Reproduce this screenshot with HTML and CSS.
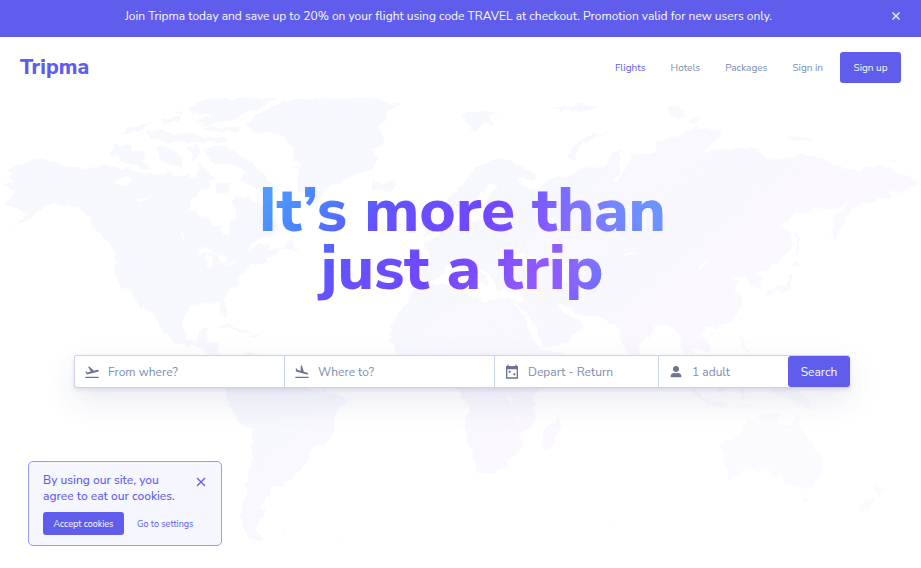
FILE: index.html
```html
<!DOCTYPE html>
<html lang="en">
<head>
<meta charset="utf-8">
<meta name="viewport" content="width=device-width, initial-scale=1">
<title>Tripma</title>
<link rel="stylesheet" href="styles.css">
</head>
<body>
<div class="banner">
  <p class="banner-text">Join Tripma today and save up to 20% on your flight using code TRAVEL at checkout. Promotion valid for new users only.</p>
  <button class="close" type="button" aria-label="Dismiss promotion">
    <svg viewBox="0 0 10 10" width="10" height="10"><path d="M1.5 1.5 8.5 8.5M8.5 1.5 1.5 8.5"/></svg>
  </button>
</div>
<header class="header">
  <a class="logo" href="#">Tripma</a>
  <nav class="nav">
    <a class="active" href="#">Flights</a>
    <a href="#">Hotels</a>
    <a href="#">Packages</a>
    <a href="#">Sign in</a>
    <button class="primary signup" type="button">Sign up</button>
  </nav>
</header>
<main class="hero">
  <svg class="map" viewBox="0 24 2763 1410" aria-hidden="true">
    <defs>
      <linearGradient id="land" gradientUnits="userSpaceOnUse" x1="900" y1="100" x2="1900" y2="1300">
        <stop offset="0" stop-color="#f7f8fe"/>
        <stop offset=".4" stop-color="#f7f8fe"/>
        <stop offset=".72" stop-color="#faf7fe"/>
        <stop offset="1" stop-color="#fbfaff"/>
      </linearGradient>
      <filter id="coast" filterUnits="userSpaceOnUse" x="0" y="24" width="2763" height="1410">
        <feTurbulence type="fractalNoise" baseFrequency=".035" numOctaves="3" seed="4"/>
        <feDisplacementMap in="SourceGraphic" scale="24" xChannelSelector="R" yChannelSelector="G"/>
      </filter>
    </defs>
    <g filter="url(#coast)">
      <g fill="url(#land)">
        <!-- North America -->
        <path d="M20 245 50 225 95 207 150 215 190 225 250 240 290 230 330 222 350 235 380 232 420 245 470 255 500 250 530 257 560 254 590 262 600 240 590 215 610 225 640 265 625 290 600 300 575 330 570 355 590 375 625 385 645 405 665 405 670 435 688 440 690 400 708 380 695 345 715 315 750 325 775 340 800 370 830 400 835 425 800 440 760 455 735 485 765 470 790 460 810 462 800 475 838 480 820 500 790 515 750 530 720 555 715 580 680 605 672 625 683 665 678 683 662 660 655 640 610 642 570 648 550 680 550 710 560 745 585 755 600 720 625 712 620 755 655 758 655 795 680 850 640 810 600 775 545 765 500 740 488 720 462 680 430 645 425 655 457 697 405 630 385 600 360 590 345 550 345 490 320 450 285 415 270 385 235 355 190 345 160 342 130 345 100 380 60 400 12 422 50 400 85 375 60 360 35 355 15 345 30 320 50 310 10 285 45 270Z"/>
        <!-- Arctic islands -->
        <path d="M560 60 600 35 640 24 830 24 770 60 730 70 690 95 620 105 590 90 640 80 580 70ZM335 185 345 160 385 165 400 180 440 185 430 215 460 240 420 235 370 215 335 195ZM610 180 650 165 690 175 720 200 770 235 830 290 800 290 800 315 760 290 720 270 740 250 700 225 650 220 620 200ZM355 132 400 105 450 95 430 120 390 130ZM440 130 480 120 520 135 560 128 600 140 680 145 680 155 600 157 530 155 460 150ZM480 85 540 80 530 100 490 100ZM470 170 500 165 520 190 550 200 550 235 510 225 480 215ZM565 170 595 165 600 190 580 210ZM530 70 545 68 545 78ZM655 275 690 280 680 310 650 310ZM595 105 660 115 720 110 720 120 640 125Z"/>
        <!-- Greenland and Iceland -->
        <path d="M740 98 770 75 830 40 870 28 1110 24 1140 30 1205 42 1165 60 1160 90 1135 110 1155 150 1140 170 1110 180 1135 205 1120 235 1060 255 1030 275 990 285 960 320 945 350 915 310 890 280 895 240 880 235 905 225 880 200 875 160 840 135 790 130 750 115ZM1118 275 1140 282 1170 270 1195 285 1160 306 1120 300ZM845 480 865 445 895 485 870 480Z"/>
        <!-- Caribbean -->
        <path d="M650 712 670 698 720 718 765 728 720 725 680 710ZM740 735 775 728 795 738 760 742ZM697 736 712 736 710 742Z"/>
        <!-- South America -->
        <path d="M655 810 690 800 740 788 780 795 840 840 920 895 955 900 1030 920 1035 940 1005 980 1000 1030 980 1060 950 1065 930 1085 925 1110 880 1158 862 1165 850 1190 805 1190 815 1210 800 1215 785 1250 795 1265 775 1290 770 1320 795 1350 780 1357 755 1350 725 1310 720 1260 735 1220 755 1110 758 1022 715 995 700 960 673 922 675 895 690 850ZM835 1318 855 1316 850 1324ZM1010 1345 1025 1350 1020 1354Z"/>
        <!-- Europe, Asia and Arabia -->
        <path d="M1550 640 1600 700 1630 775 1700 757 1757 705 1720 680 1685 665 1668 640 1700 645 1730 672 1800 680 1830 700 1850 705 1860 740 1870 770 1885 795 1915 795 1915 770 1950 735 1965 710 2000 700 2030 725 2040 760 2060 790 2085 800 2070 765 2110 790 2130 785 2125 760 2105 730 2115 710 2150 715 2200 690 2225 650 2225 625 2200 585 2215 570 2195 565 2215 555 2240 555 2260 590 2280 600 2285 570 2265 550 2310 535 2360 495 2380 440 2370 425 2335 410 2390 370 2450 360 2510 355 2550 325 2540 345 2500 380 2490 430 2500 450 2530 410 2560 350 2590 345 2620 330 2680 320 2660 300 2720 305 2755 280 2700 245 2640 228 2590 230 2580 245 2530 235 2480 210 2400 190 2380 205 2300 210 2280 185 2250 172 2180 175 2110 180 2165 140 2150 125 2090 110 2040 135 1970 160 1960 185 1920 190 1890 195 1885 225 1870 250 1850 270 1835 270 1860 250 1860 180 1835 185 1820 230 1760 235 1720 255 1680 260 1640 270 1620 290 1590 300 1570 285 1545 262 1600 275 1615 260 1590 240 1530 210 1480 210 1430 230 1400 270 1370 310 1340 335 1345 380 1380 370 1400 380 1420 360 1430 330 1470 280 1490 285 1460 320 1450 350 1480 355 1440 390 1400 400 1340 410 1300 450 1265 455 1290 480 1285 520 1245 525 1245 575 1300 575 1320 560 1340 530 1390 520 1420 560 1460 590 1470 575 1430 540 1450 540 1480 570 1490 600 1520 600 1570 605 1570 630Z"/>
        <path d="M1260 395 1280 375 1290 400 1310 430 1265 445 1280 425ZM1230 410 1250 405 1250 430 1225 430ZM1700 200 1720 165 1760 140 1830 122 1780 145 1735 170 1720 195 1740 215ZM1385 75 1420 70 1500 65 1460 85 1485 105 1450 100 1430 122 1400 105ZM1650 57 1750 43 1800 50 1740 65ZM2000 48 2030 50 2060 75 2040 88 2010 70ZM2055 95 2080 80 2100 92 2080 102ZM2350 140 2400 138 2450 152 2400 155ZM2670 208 2695 208 2680 214Z"/>
        <!-- Japan, Philippines and Indonesia -->
        <path d="M2385 420 2395 460 2395 495 2385 495ZM2385 515 2410 518 2390 535 2370 530ZM2370 550 2380 560 2375 595 2330 605 2295 625 2310 600 2350 590ZM2215 690 2225 680 2222 700ZM2215 740 2230 738 2240 775 2255 795 2235 785ZM2125 730 2140 725 2135 738ZM2060 880 2100 910 2120 935 2090 920ZM2110 930 2170 938 2190 948 2120 942ZM2140 880 2190 850 2200 890 2160 910ZM2300 880 2360 885 2410 915 2445 962 2410 945 2340 920ZM2220 890 2240 900 2230 930 2215 910ZM2200 950 2260 948 2230 955Z"/>
        <!-- Africa -->
        <path d="M1245 600 1275 590 1340 583 1395 578 1390 610 1450 635 1500 625 1560 630 1545 640 1570 680 1600 750 1625 782 1695 785 1640 860 1600 920 1605 995 1562 1030 1567 1065 1540 1100 1490 1150 1440 1155 1410 1080 1392 1005 1408 950 1370 895 1240 845 1200 810 1172 760 1170 705 1190 680 1225 630ZM1675 975 1680 1005 1655 1075 1630 1075 1630 1020 1655 1005Z"/>
        <!-- Australia and New Zealand -->
        <path d="M2160 1060 2215 1035 2245 990 2275 1000 2290 970 2340 975 2335 1000 2370 1010 2385 965 2400 1010 2440 1060 2470 1110 2460 1160 2435 1190 2400 1197 2360 1180 2345 1150 2325 1165 2300 1140 2240 1140 2180 1165 2175 1110ZM2405 1218 2427 1218 2418 1242ZM2625 1165 2640 1190 2662 1190 2635 1220 2625 1200ZM2620 1220 2625 1232 2590 1270 2572 1262ZM2555 1043 2572 1055 2568 1058ZM1820 1295 1835 1293 1832 1300Z"/>
      </g>
      <!-- Lakes and inland seas -->
      <path fill="#fff" d="M590 488 620 472 650 490 610 492ZM625 500 640 500 635 535 622 530ZM650 495 680 498 685 515 660 515ZM650 530 690 522 710 510 700 525ZM538 418 548 425 555 450 545 440ZM345 275 380 265 395 275 365 288ZM405 335 450 318 430 335ZM1530 510 1560 490 1600 500 1625 520 1580 525 1545 528ZM1675 510 1705 515 1695 545 1705 580 1690 580 1675 545ZM1868 500 1890 490 1910 493 1880 500ZM2090 530 2115 515 2130 490 2120 520 2095 535ZM1515 905 1532 925 1535 945ZM1550 960 1560 990 1558 1000Z"/>
    </g>
  </svg>
  <h1 class="title">It’s more than<br>just a trip</h1>
  <form class="search">
    <label class="field">
      <svg viewBox="0 0 24 24" width="16" height="16"><path d="M2 19h20v2H2zM22.07 9.64c-.21-.8-1.04-1.28-1.84-1.06L14.92 10l-6.9-6.43-1.93.51 4.14 7.17-4.97 1.33-1.97-1.54-1.45.39 2.59 4.49L21 11.49c.81-.23 1.28-1.05 1.07-1.85z"/></svg>
      <input type="text" aria-label="Departure city" placeholder="From where?">
    </label>
    <label class="field">
      <svg viewBox="0 0 24 24" width="16" height="16"><path d="M2 19h20v2H2zM19.34 15.85c.8.21 1.62-.26 1.84-1.06.21-.8-.26-1.62-1.06-1.84l-5.31-1.42-2.76-9.02L10.12 2v8.28L5.15 8.95l-.93-2.32-1.45-.39v5.17l16.57 4.44z"/></svg>
      <input type="text" aria-label="Destination city" placeholder="Where to?">
    </label>
    <label class="field">
      <svg viewBox="0 0 24 24" width="16" height="16"><path fill-rule="evenodd" d="M21 3h-2V1h-2v2H7V1H5v2H3v19h18zM5 8h14v12H5zM7 10h3v3H7zM14 14h3v3h-3z"/></svg>
      <input type="text" aria-label="Travel dates" placeholder="Depart - Return">
    </label>
    <label class="field">
      <svg viewBox="0 0 24 24" width="16" height="16"><path d="M12 12a4.500 4.500 0 1 0 0-9 4.500 4.500 0 0 0 0 9zM4 20v-2c0-3 3-4.500 5-5 1 1 5 1 6 0 2 .5 5 2 5 5v2z"/></svg>
      <input type="text" aria-label="Travelers" placeholder="1 adult">
    </label>
    <button class="primary submit" type="submit">Search</button>
  </form>
</main>
<aside class="cookies">
  <div class="cookies-top">
    <p class="cookies-text">By using our site, you<br>agree to eat our cookies.</p>
    <button class="close" type="button" aria-label="Close cookie notice">
      <svg viewBox="0 0 10 10" width="10" height="10"><path d="M1 1 9 9M9 1 1 9"/></svg>
    </button>
  </div>
  <div class="cookies-actions">
    <button class="primary accept" type="button">Accept cookies</button>
    <a href="#">Go to settings</a>
  </div>
</aside>
</body>
</html>
```
FILE: styles.css
```css
* { box-sizing: border-box; }
body {
  margin: 0;
  min-height: 100vh;
  position: relative;
  background: #fff;
  color: #605dec;
  font-family: "Nunito Sans", Nunito, "Open Sans", sans-serif;
  font-size: 12px;
}
p, h1 { margin: 0; }
a { color: inherit; text-decoration: none; }
button, input { font: inherit; }
button { cursor: pointer; }

.primary {
  border: 0;
  border-radius: 3px;
  background: #605dec;
  color: #fafafa;
  padding: 0;
}
.close {
  display: flex;
  padding: 0;
  border: 0;
  background: none;
  color: inherit;
}
.close svg { fill: none; stroke: currentColor; stroke-width: 1.3; }

.banner {
  display: flex;
  align-items: center;
  gap: 14px;
  padding: 8px 20px 13px;
  background: #605dec;
  color: #fafafa;
}
.banner-text {
  flex: 1;
  text-align: center;
  line-height: 16px;
}

.header {
  display: flex;
  align-items: center;
  justify-content: space-between;
  padding: 15px 20px;
}
.logo {
  font-size: 21px;
  line-height: 24px;
  padding-bottom: 2px;
  font-weight: 800;
}
.nav {
  display: flex;
  align-items: center;
  gap: 25px;
  font-size: 10px;
  color: #7c8db0;
}
.nav .active { color: #605dec; }
.signup { width: 61px; height: 31px; margin-left: -8px; }

.hero { position: relative; padding: 84px 71px 80px 74px; }
.map {
  position: absolute;
  top: 0;
  left: 0;
  width: 100%;
  z-index: -1;
}
.title {
  width: fit-content;
  margin: 0 auto;
  text-align: center;
  font-size: 62px;
  line-height: 58px;
  font-weight: 800;
  padding-bottom: 8px;
  color: transparent;
  background:
    linear-gradient(60deg, rgba(107, 148, 255, 0) 66%, #6b94ff 93%),
    linear-gradient(128deg, #4f9cff 4%, #4a80ff 16%, #6055ff 28%, #6c4dff 38%, #7048ff 48%, #7a4cff 56%, #9058ff 68%, #8d60ff 78%, #6a60ff 86%);
  -webkit-background-clip: text;
  background-clip: text;
}
.search {
  display: grid;
  grid-template-columns: 209fr 210fr 164fr 130fr 62px;
  height: 33px;
  margin-top: 49px;
  border: 1px solid #cbd4e6;
  border-right: 0;
  border-radius: 3px;
  background: #fff;
  box-shadow: 0 2px 4px rgba(28, 5, 77, .1), 0 12px 32px rgba(33, 49, 120, .1);
}
.field {
  display: flex;
  align-items: center;
  gap: 8px;
  padding-left: 9px;
  min-width: 0;
}
.field + .field { border-left: 1px solid #cbd4e6; }
.field svg { flex: none; fill: #6e7491; }
.field input {
  min-width: 0;
  flex: 1;
  border: 0;
  padding: 0;
  background: none;
  color: #7c8db0;
}
.field input::placeholder { color: #7c8db0; opacity: 1; }

.cookies {
  position: absolute;
  left: 28px;
  bottom: 22px;
  width: 194px;
  padding: 10px 14px;
  border: 1px solid #9c9af2;
  border-radius: 5px;
  background: #f6f6fe;
}
.cookies-top {
  display: flex;
  justify-content: space-between;
  align-items: flex-start;
}
.cookies-top .close { margin: 5px 1px; }
.cookies-text { line-height: 16px; font-weight: 500; }
.cookies-actions {
  display: flex;
  align-items: center;
  gap: 13px;
  margin-top: 8px;
  font-size: 9px;
}
.accept { width: 81px; height: 23px; }
```
